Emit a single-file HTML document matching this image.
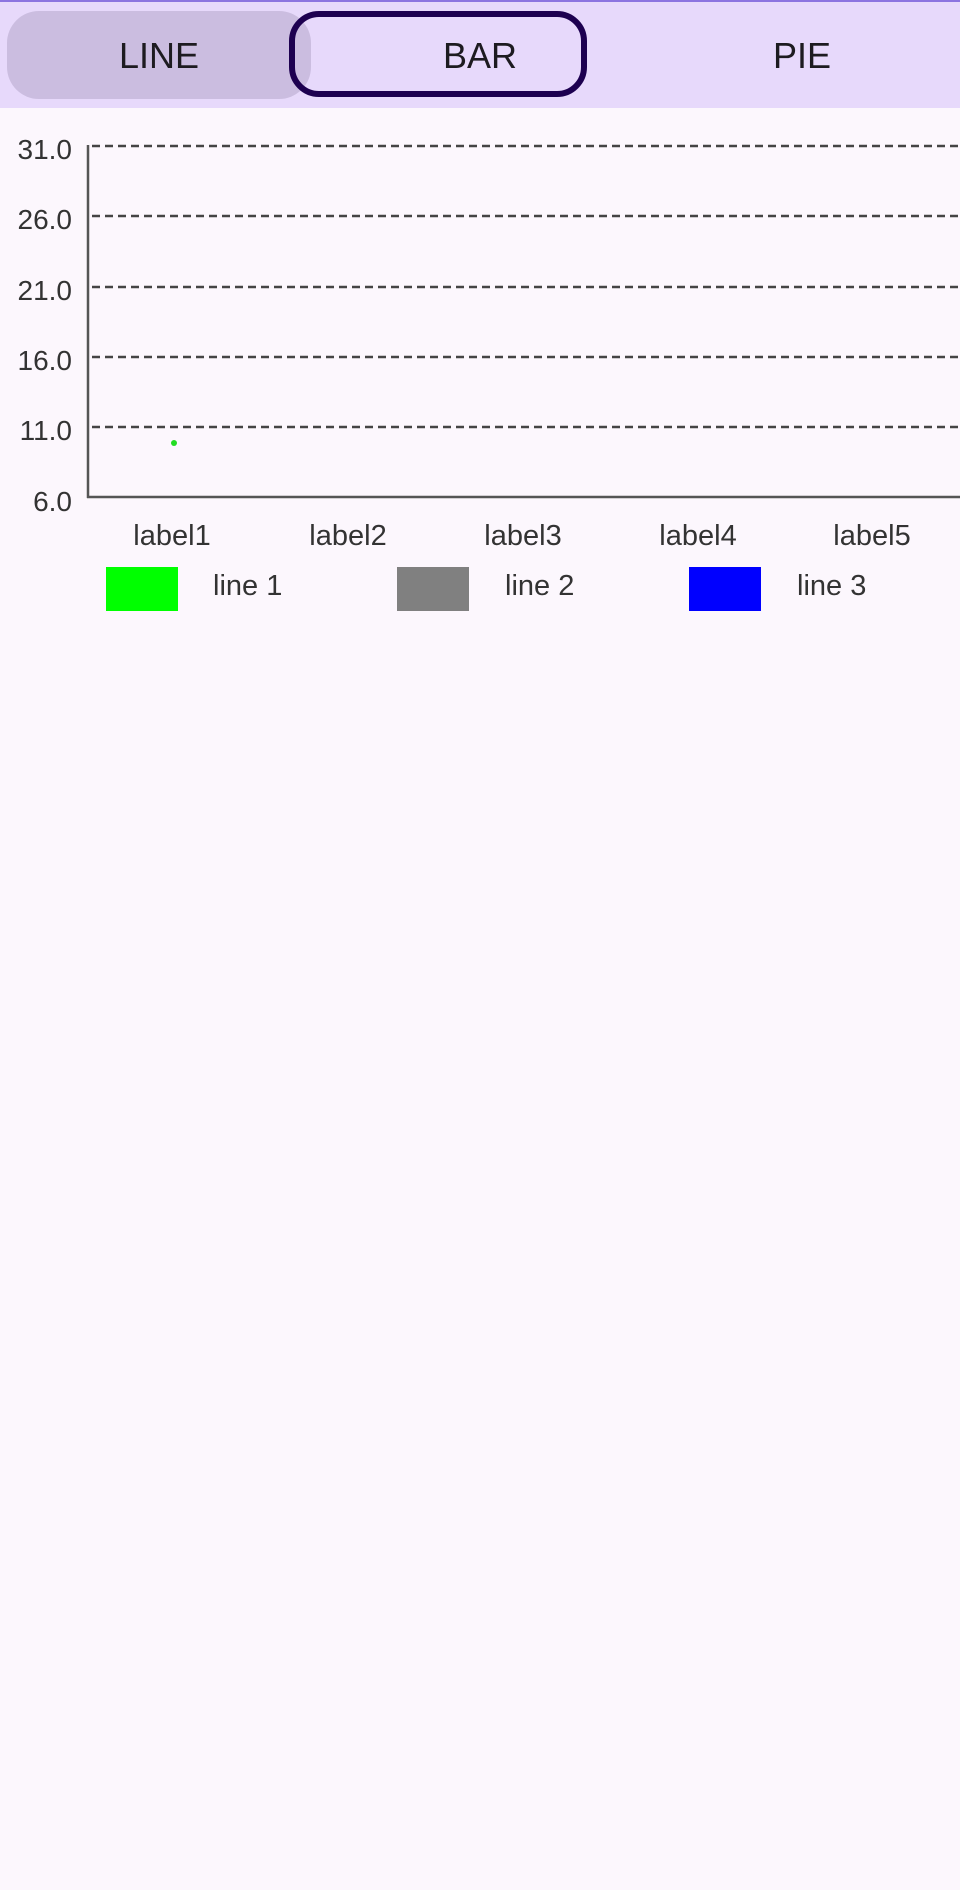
<!DOCTYPE html>
<html><head><style>
body{margin:0;width:960px;height:1890px;background:#fcf7fd;font-family:"Liberation Sans",sans-serif;position:relative;overflow:hidden}
.hdr{position:absolute;left:0;top:0;width:960px;height:108px;background:#e7d9fb;border-top:2px solid #8c74e0;box-sizing:border-box}
.pill{position:absolute;left:7px;top:11px;width:304px;height:88px;border-radius:32px;background:#cbbde0}
.sel{position:absolute;left:289px;top:11px;width:298px;height:86px;border:6px solid #1d0050;border-radius:30px;box-sizing:border-box}
.t{position:absolute;top:35px;font-size:36px;color:#1d1b20;transform:translateX(-50%)}
.yl{position:absolute;width:72px;text-align:right;font-size:28px;color:#333;left:0}
.xl{position:absolute;top:520px;font-size:29px;color:#333;transform:translateX(-50%)}
.box{position:absolute;top:567px;width:72px;height:44px}
.lt{position:absolute;top:570px;font-size:29px;color:#333}
</style></head><body>
<div class="hdr"></div>
<div class="pill"></div>
<div class="sel"></div>
<div class="t" style="left:159px">LINE</div>
<div class="t" style="left:480px">BAR</div>
<div class="t" style="left:802px">PIE</div>
<svg width="960" height="520" style="position:absolute;left:0;top:0">
<g stroke="#444" stroke-width="2.5" stroke-dasharray="8 5">
<line x1="92" y1="146" x2="960" y2="146"/>
<line x1="92" y1="216" x2="960" y2="216"/>
<line x1="92" y1="287" x2="960" y2="287"/>
<line x1="92" y1="357" x2="960" y2="357"/>
<line x1="92" y1="427" x2="960" y2="427"/>
</g>
<line x1="88" y1="145" x2="88" y2="498" stroke="#555" stroke-width="2.5"/>
<line x1="87" y1="497" x2="960" y2="497" stroke="#555" stroke-width="2.5"/>
<circle cx="174" cy="443" r="3" fill="#22dd22"/>
</svg>
<div class="yl" style="top:134px">31.0</div>
<div class="yl" style="top:204px">26.0</div>
<div class="yl" style="top:275px">21.0</div>
<div class="yl" style="top:345px">16.0</div>
<div class="yl" style="top:415px">11.0</div>
<div class="yl" style="top:486px">6.0</div>
<div class="xl" style="left:172px">label1</div>
<div class="xl" style="left:348px">label2</div>
<div class="xl" style="left:523px">label3</div>
<div class="xl" style="left:698px">label4</div>
<div class="xl" style="left:872px">label5</div>
<div class="box" style="left:106px;background:#00ff00"></div>
<div class="lt" style="left:213px">line 1</div>
<div class="box" style="left:397px;background:#808080"></div>
<div class="lt" style="left:505px">line 2</div>
<div class="box" style="left:689px;background:#0000ff"></div>
<div class="lt" style="left:797px">line 3</div>
</body></html>
